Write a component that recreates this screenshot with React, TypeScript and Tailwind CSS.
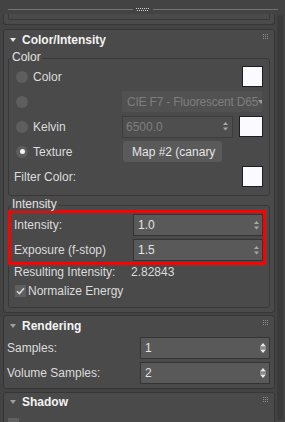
import React from "react";

const FONT = "font-['Liberation_Sans',Arial,sans-serif]";

function Tri({ light }: { light?: boolean }) {
  return (
    <svg width="6" height="4" viewBox="0 0 6 4" className="shrink-0">
      <path d="M0 0H6L3 4Z" fill={light ? "#e6e6e6" : "#a0a0a0"} />
    </svg>
  );
}

function Grip() {
  const dots: React.ReactNode[] = [];
  [0, 2, 4].forEach((y) =>
    [0, 2, 4].forEach((x) => dots.push(<rect key={`${x}-${y}`} x={x} y={y} width="1" height="1" />))
  );
  return (
    <svg width="5" height="5" viewBox="0 0 5 5" fill="#8c8c8c" className="shrink-0">
      {dots}
    </svg>
  );
}

function SpinArrows({ bright }: { bright?: boolean }) {
  return bright ? (
    <svg width="6" height="10" viewBox="0 0 6 10" className="shrink-0">
      <path d="M3 0L6 3.5H0Z" fill="#e8e8e8" />
      <rect x="0" y="4.5" width="6" height="1" fill="#bdbdbd" />
      <path d="M0 6.5H6L3 10Z" fill="#e8e8e8" />
    </svg>
  ) : (
    <svg width="5" height="9" viewBox="0 0 5 9" className="shrink-0">
      <path d="M2.5 0L5 3H0Z" fill="#a8a8a8" />
      <path d="M0 5.5H5L2.5 8.5Z" fill="#a8a8a8" />
    </svg>
  );
}

function Radio({ checked }: { checked?: boolean }) {
  return (
    <span className="w-[12px] h-[12px] rounded-full bg-[#5e5e5e] flex items-center justify-center shrink-0">
      {checked && <span className="w-[5px] h-[5px] rounded-full bg-[#f4f4f4]" />}
    </span>
  );
}

function Swatch({ wide }: { wide?: boolean }) {
  return (
    <div
      className={`${wide ? "w-[24px]" : "w-[21px]"} h-[21px] bg-[#fbfbff] border border-[#1e1e1e] shrink-0`}
    />
  );
}

function Check() {
  return (
    <span className="w-[11px] h-[12px] bg-[#5f5f5f] flex items-center justify-center shrink-0">
      <svg width="9" height="8" viewBox="0 0 9 8">
        <path d="M1 4.2L3.4 6.6L8 1.2" stroke="#d8d8d8" strokeWidth="1.6" fill="none" />
      </svg>
    </span>
  );
}

function Spinner({ value, w, bright, disabled }: { value: string; w: string; bright?: boolean; disabled?: boolean }) {
  return (
    <div
      className={`${w} h-[22px] flex items-center justify-between border ${
        disabled ? "bg-[#4e4e4e] border-[#3c3c3c] text-[#7e7e7e] pl-[3px] pr-[4px]" : "bg-[#595959] border-[#343434] text-[#e4e4e4] pl-[4px] pr-[3px]"
      } shrink-0`}
    >
      <span className="text-[12px]">{value}</span>
      <SpinArrows bright={bright} />
    </div>
  );
}

function GroupBox({ label, className, children }: { label: string; className?: string; children: React.ReactNode }) {
  return (
    <div className={`relative border border-[#383838] rounded-[3px] ${className ?? ""}`}>
      <span className="absolute left-[2px] top-[-9px] px-[1px] bg-[#4a4a4a] leading-[14px] text-[12px] text-[#e2e2e2]">
        {label}
      </span>
      {children}
    </div>
  );
}

function Title({ text, light, h }: { text: string; light?: boolean; h: string }) {
  return (
    <div className={`${h} flex items-center pl-[6px] pr-[6px]`}>
      <Tri light={light} />
      <span className="ml-[6px] text-[12px] font-bold text-[#f3f3f3]">{text}</span>
      <div className="ml-auto self-start mt-[4px]">
        <Grip />
      </div>
    </div>
  );
}

export default function App() {
  return (
    <div className={`w-[285px] h-[422px] overflow-hidden bg-[#434343] ${FONT} text-[12px] text-[#dcdcdc]`}>
      {/* top splitter */}
      <div className="h-[14px] w-[278px] flex items-start pt-[8px] pl-[8px]">
        <div className="w-[125px] h-[1px] mt-[1px] bg-[#737373]" />
        <svg width="14" height="3" viewBox="0 0 14 3" className="ml-[3px]" fill="#d0d0d0">
          {[0, 2, 4, 6, 8, 10, 12].map((x) => (
            <rect key={`a${x}`} x={x} y={0} width="1" height="1" />
          ))}
          {[1, 3, 5, 7, 9, 11].map((x) => (
            <rect key={`b${x}`} x={x} y={2} width="1" height="1" />
          ))}
        </svg>
        <div className="flex-1 h-[1px] mt-[1px] ml-[3px] bg-[#737373]" />
      </div>

      <div className="flex">
        <div className="w-[277px] pl-[3px] pr-[2px] flex flex-col">
          {/* previous rollout (bottom) */}
          <div className="h-[11px] bg-[#4a4a4a] border-x border-b border-[#363636] rounded-b-[3px]">
            <div className="mx-[4px] h-[6px] border-x border-b border-[#383838] rounded-b-[2px]" />
          </div>

          {/* Color/Intensity */}
          <div className="mt-[4px] bg-[#4a4a4a] border border-[#363636] rounded-[3px] pb-[4px]">
            <Title text="Color/Intensity" light h="h-[20px]" />
            <GroupBox label="Color" className="mt-[8px] mx-[4px] pt-[7px] pb-[8px]">
              <div className="flex flex-col gap-[4px] pl-[7px] pr-[6px]">
                <div className="h-[21px] flex items-center">
                  <div className="w-[106px] flex items-center gap-[5px]">
                    <Radio />
                    <span>Color</span>
                  </div>
                  <div className="ml-auto">
                    <Swatch />
                  </div>
                </div>
                <div className="h-[21px] flex items-center">
                  <div className="w-[106px] flex items-center gap-[5px]">
                    <Radio />
                  </div>
                  <div className="w-[140px] h-[21px] bg-[#515151] flex items-center pl-[5px] pr-[7px] text-[#7e7e7e] overflow-hidden whitespace-nowrap">
                    <span className="text-[12px] tracking-[-0.2px]">CIE F7 - Fluorescent D65</span>
                    <svg width="6" height="4" viewBox="0 0 6 4" className="ml-auto shrink-0">
                      <path d="M0 0H6L3 4Z" fill="#9a9a9a" />
                    </svg>
                  </div>
                </div>
                <div className="h-[21px] flex items-center">
                  <div className="w-[106px] flex items-center gap-[5px]">
                    <Radio />
                    <span>Kelvin</span>
                  </div>
                  <Spinner value="6500.0" w="w-[111px]" disabled />
                  <div className="ml-auto">
                    <Swatch wide />
                  </div>
                </div>
                <div className="h-[21px] flex items-center">
                  <div className="w-[107px] flex items-center gap-[5px]">
                    <Radio checked />
                    <span>Texture</span>
                  </div>
                  <div className="w-[99px] h-[21px] bg-[#5a5a5a] rounded-[3px] flex items-center pl-[9px] text-[#e4e4e4] whitespace-nowrap overflow-hidden">
                    Map #2 (canary
                  </div>
                </div>
                <div className="h-[21px] flex items-center">
                  <span className="-ml-[2px]">Filter Color:</span>
                  <div className="ml-auto">
                    <Swatch />
                  </div>
                </div>
              </div>
            </GroupBox>

            <GroupBox label="Intensity" className="mt-[9px] mx-[4px] pt-[4px] pb-[9px]">
              <div className="w-[258px] -ml-[1px] border-[3px] border-[#ff0000] pt-[1px] pb-[1px] pl-[3px] flex flex-col gap-[3px]">
                <div className="h-[22px] flex items-center">
                  <span>Intensity:</span>
                  <div className="ml-auto">
                    <Spinner value="1.0" w="w-[130px]" />
                  </div>
                </div>
                <div className="h-[22px] flex items-center">
                  <span>Exposure (f-stop)</span>
                  <div className="ml-auto">
                    <Spinner value="1.5" w="w-[130px]" />
                  </div>
                </div>
              </div>
              <div className="h-[14px] flex items-center pl-[5px]">
                <span className="w-[117px]">Resulting Intensity:</span>
                <span>2.82843</span>
              </div>
              <div className="mt-[5px] h-[14px] flex items-center pl-[6px] gap-[2px]">
                <Check />
                <span>Normalize Energy</span>
              </div>
            </GroupBox>
          </div>

          {/* Rendering */}
          <div className="mt-[2px] bg-[#4a4a4a] border border-[#363636] rounded-[3px] pb-[4px]">
            <Title text="Rendering" h="h-[20px]" />
            <div className="mt-[1px] flex flex-col gap-[3px] pl-[3px] pr-[4px]">
              <div className="h-[22px] flex items-center">
                <span>Samples:</span>
                <div className="ml-auto">
                  <Spinner value="1" w="w-[130px]" bright />
                </div>
              </div>
              <div className="h-[22px] flex items-center">
                <span>Volume Samples:</span>
                <div className="ml-auto">
                  <Spinner value="2" w="w-[130px]" bright />
                </div>
              </div>
            </div>
          </div>

          {/* Shadow */}
          <div className="mt-[3px] bg-[#4a4a4a] border border-[#363636] rounded-t-[3px] h-[40px]">
            <Title text="Shadow" h="h-[18px]" />
            <div className="mt-[7px] h-[14px] flex items-start pl-[4px] gap-[4px]">
              <span className="w-[11px] h-[12px] bg-[#5f5f5f]" />
              <span>Cast Shadows</span>
            </div>
          </div>
        </div>

        {/* scrollbar */}
        <div className="w-[6px] h-[405px] mt-[1px] bg-[#3a3a3a] rounded-[3px]" />
      </div>
    </div>
  );
}
